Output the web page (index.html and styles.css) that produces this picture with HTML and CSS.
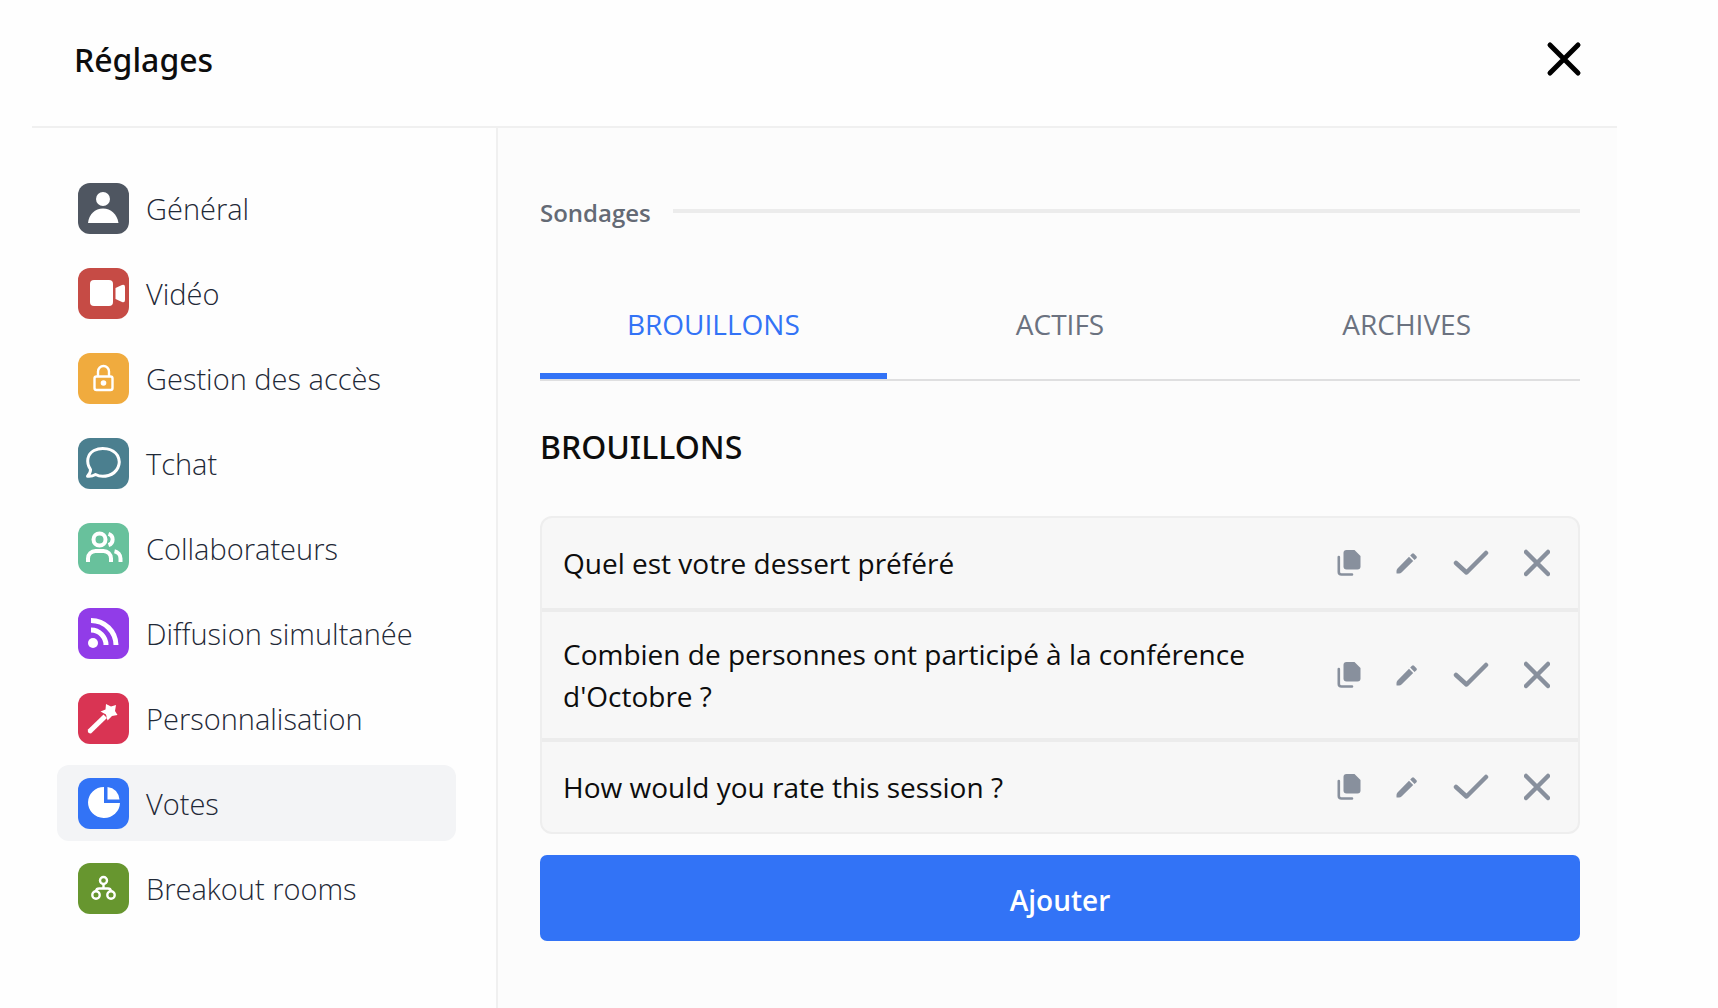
FILE: index.html
```html
<!DOCTYPE html>
<html lang="fr">
<head>
<meta charset="utf-8">
<title>Réglages</title>
<link rel="stylesheet" href="styles.css">
</head>
<body>
<div class="dialog">
  <header class="header">
    <h1 class="title">Réglages</h1>
    <button class="close" type="button" aria-label="Fermer">
      <svg width="36" height="36" viewBox="0 0 36 36"><path d="M4 4 32 32M32 4 4 32" fill="none" stroke="currentColor" stroke-width="5" stroke-linecap="round"/></svg>
    </button>
  </header>
  <div class="body">
    <nav class="sidebar">
      <a class="item" href="#general">
        <svg class="tile general" viewBox="0 0 51 51"><circle cx="25" cy="16" r="7"/><path d="M10 40C11 31 17 25.500 25 25.500S39 31 40.500 40Z"/></svg>
        <span>Général</span></a>
      <a class="item" href="#video">
        <svg class="tile video" viewBox="0 0 51 51"><rect x="12" y="12" width="23" height="26" rx="4"/><path d="M37.500 20 44 17q3-1 3 2V32q0 3-3 2L37.500 31Z"/></svg>
        <span>Vidéo</span></a>
      <a class="item" href="#acces">
        <svg class="tile access" viewBox="0 0 51 51"><g class="line thin"><rect x="16.500" y="23.500" width="18" height="13.500" rx="2"/><path d="M20 23V18.500a5.500 5.500 0 0 1 11 0V23"/></g><circle cx="25.500" cy="30" r="2.800"/></svg>
        <span>Gestion des accès</span></a>
      <a class="item" href="#tchat">
        <svg class="tile chat" viewBox="0 0 51 51"><path class="line" d="M12.500 31.500C7.500 24 9.500 16 16 12.500 24 8.500 35 10.500 39.500 17.500 44 26 39 35 30.500 37.500 26 38.800 20.500 38.200 17.500 36.500 15 38 12 38.500 9.500 38.200 11.500 36 12.800 34 12.500 31.500Z"/></svg>
        <span>Tchat</span></a>
      <a class="item" href="#collaborateurs">
        <svg class="tile team" viewBox="0 0 51 51"><g class="line bold"><circle cx="21.500" cy="16.500" r="6"/><path d="M10 39V35.500A7.500 7.500 0 0 1 17.500 28H25.500A7.500 7.500 0 0 1 33 35.500V39M30.500 10.800a6 6 0 0 1 0 11.400M36.500 28.200A7.500 7.500 0 0 1 42.500 35.500V39"/></g></svg>
        <span>Collaborateurs</span></a>
      <a class="item" href="#diffusion">
        <svg class="tile cast" viewBox="0 0 51 51"><circle cx="15" cy="35" r="5"/><path class="line wide" d="M13 22A15 15 0 0 1 28 37M13 12.500A25 25 0 0 1 38 37"/></svg>
        <span>Diffusion simultanée</span></a>
      <a class="item" href="#personnalisation">
        <svg class="tile custom" viewBox="0 0 51 51"><path d="M10 36.500 25.500 21.500 29 25 13 40.500Q9 40.500 10 36.500Z"/><path d="M28 11 33 13.500 38 12 37 18 39.500 22 34 23 29.500 27.500 28 21.500 22.500 18.500 27.500 16.500Z"/></svg>
        <span>Personnalisation</span></a>
      <a class="item active" href="#votes" aria-current="page">
        <svg class="tile votes" viewBox="0 0 51 51"><path d="M26 9V25H42A16 15.500 0 1 1 26 9Z"/><path d="M29.500 9Q40 10.500 41.500 21.500H29.500Z"/></svg>
        <span>Votes</span></a>
      <a class="item" href="#breakout">
        <svg class="tile rooms" viewBox="0 0 51 51"><g class="line thin"><circle cx="25.500" cy="17.500" r="3.500"/><circle cx="18" cy="32" r="3.700"/><circle cx="33" cy="32" r="3.700"/><path d="M25.500 21V25.500M18 28Q18.500 25.500 21 25.500H30Q32.500 25.500 33 28"/></g></svg>
        <span>Breakout rooms</span></a>
    </nav>
    <main class="content">
      <div class="section"><h2 class="section-name">Sondages</h2><hr class="rule"></div>
      <div class="tabs" role="tablist">
        <button class="tab selected" type="button" role="tab" aria-selected="true">BROUILLONS</button>
        <button class="tab" type="button" role="tab" aria-selected="false">ACTIFS</button>
        <button class="tab" type="button" role="tab" aria-selected="false">ARCHIVES</button>
      </div>
      <h3 class="heading">BROUILLONS</h3>
      <svg class="symbols" aria-hidden="true">
        <symbol id="copy" viewBox="0 0 24 28"><path d="M9.500 1H17.500L23.500 7V17.500Q23.500 20.500 20.500 20.500H9.500Q6.500 20.500 6.500 17.500V4Q6.500 1 9.500 1Z"/><path d="M1.800 8V23Q1.800 25.500 4.500 25.500H15" fill="none" stroke="currentColor" stroke-width="2.600" stroke-linecap="round"/></symbol>
        <symbol id="pencil" viewBox="0 0 22 22"><path d="M13 4.800 17.200 9 5.500 20.500Q4.500 21.500 3 21.500H1Q.5 21.500 .5 21V19Q.5 17.500 1.500 16.500ZM14.200 3.600 16 1.800Q17 .8 18 1.800L20.500 4.200Q21.300 5.200 20.500 6.200L18.500 7.900Z"/></symbol>
        <symbol id="check" viewBox="0 0 36 28"><path d="M3 14 13.500 23.500 33 4" fill="none" stroke="currentColor" stroke-width="4.500" stroke-linecap="round" stroke-linejoin="round"/></symbol>
        <symbol id="cross" viewBox="1 0 26 28"><path d="M3 3 25 25M25 3 3 25" fill="none" stroke="currentColor" stroke-width="4.500" stroke-linecap="round"/></symbol>
      </svg>
      <ul class="polls">
        <li class="poll"><span class="question">Quel est votre dessert préféré</span>
          <span class="actions">
            <button type="button" aria-label="Dupliquer"><svg width="24" height="28"><use href="#copy"/></svg></button>
            <button type="button" aria-label="Modifier"><svg width="22" height="22"><use href="#pencil"/></svg></button>
            <button type="button" aria-label="Activer"><svg width="36" height="28"><use href="#check"/></svg></button>
            <button type="button" aria-label="Supprimer"><svg width="26" height="28"><use href="#cross"/></svg></button>
          </span></li>
        <li class="poll"><span class="question">Combien de personnes ont participé à la conférence d'Octobre ?</span>
          <span class="actions">
            <button type="button" aria-label="Dupliquer"><svg width="24" height="28"><use href="#copy"/></svg></button>
            <button type="button" aria-label="Modifier"><svg width="22" height="22"><use href="#pencil"/></svg></button>
            <button type="button" aria-label="Activer"><svg width="36" height="28"><use href="#check"/></svg></button>
            <button type="button" aria-label="Supprimer"><svg width="26" height="28"><use href="#cross"/></svg></button>
          </span></li>
        <li class="poll"><span class="question">How would you rate this session ?</span>
          <span class="actions">
            <button type="button" aria-label="Dupliquer"><svg width="24" height="28"><use href="#copy"/></svg></button>
            <button type="button" aria-label="Modifier"><svg width="22" height="22"><use href="#pencil"/></svg></button>
            <button type="button" aria-label="Activer"><svg width="36" height="28"><use href="#check"/></svg></button>
            <button type="button" aria-label="Supprimer"><svg width="26" height="28"><use href="#cross"/></svg></button>
          </span></li>
      </ul>
      <button class="add" type="button">Ajouter</button>
    </main>
  </div>
</div>
</body>
</html>
```
FILE: styles.css
```css
* { box-sizing: border-box; }

body {
  margin: 0;
  background: #fefefe;
  color: #0d0d0d;
  font-family: "Open Sans", "Noto Sans", sans-serif;
  font-size: 28px;
}

h1, h2, h3, ul { margin: 0; padding: 0; }
button { padding: 0; border: 0; background: none; color: inherit; font: inherit; cursor: pointer; }
svg { display: block; }

.dialog {
  display: flex;
  flex-direction: column;
  min-height: 100vh;
  margin: 0 101px 0 32px;
}

.header {
  display: flex;
  align-items: center;
  justify-content: space-between;
  height: 128px;
  padding: 0 35px 8px 42px;
  border-bottom: 2px solid #f0f0f0;
}

.title, .heading {
  font-family: "Noto Sans", "Open Sans", sans-serif;
  font-size: 32px;
  font-weight: 500;
  line-height: 44px;
}
.title { padding-top: 2px; }
.close { color: #000; }

.body { display: flex; flex: 1; }

.sidebar {
  display: flex;
  flex-direction: column;
  flex: none;
  gap: 9px;
  width: 466px;
  padding: 42px 40px 42px 25px;
  border-right: 2px solid #f0f0f0;
}

.item {
  display: flex;
  align-items: center;
  gap: 17px;
  height: 76px;
  padding: 0 21px;
  border-radius: 12px;
  color: #1f2937;
  font-size: 29px;
  font-weight: 300;
  text-decoration: none;
}
.item.active { background: #f3f4f6; }

.tile { flex: none; width: 51px; height: 51px; border-radius: 12px; fill: #fff; }
.line { fill: none; stroke: #fff; stroke-width: 3; stroke-linejoin: round; }
.thin { stroke-width: 2.4; }
.bold { stroke-width: 4; }
.wide { stroke-width: 5; }
.general { background: #4f5661; }
.video { background: #c64b45; }
.access { background: #f0ab3e; }
.chat { background: #4b7f8f; }
.team { background: #68c19c; }
.cast { background: #913ce8; }
.custom { background: #d93453; }
.votes { background: #3273f6; }
.rooms { background: #67962f; }

.content {
  flex: 1;
  min-width: 0;
  padding: 65px 37px 65px 42px;
  background: #fcfcfc;
}

.section { display: flex; align-items: center; gap: 22px; height: 36px; }
.section-name { padding-top: 4px; color: #646a75; font-size: 24px; font-weight: 600; line-height: 36px; }
.rule { flex: 1; height: 4px; margin: 0; border: 0; background: #ececec; }

.tabs {
  display: grid;
  grid-template-columns: repeat(3, 1fr);
  margin-top: 42px;
  border-bottom: 2px solid #dfdfe0;
}
.tab {
  height: 108px;
  padding-top: 4px;
  border-bottom: 6px solid transparent;
  color: #6b7280;
}
.tab.selected { border-color: #3273f6; color: #3273f6; }

.heading { margin-top: 44px; }

.symbols { display: none; }

.polls {
  margin-top: 47px;
  border: 2px solid #eee;
  border-radius: 12px;
  background: #f7f7f7;
  list-style: none;
}
.poll {
  display: flex;
  align-items: center;
  justify-content: space-between;
  gap: 48px;
  min-height: 90px;
  padding: 21px 28px 21px 21px;
}
.poll + .poll { min-height: 94px; border-top: 4px solid #ececec; }
.question { line-height: 42px; }

.actions { display: flex; flex: none; align-items: center; gap: 35px; color: #88909d; }
.actions svg { fill: currentColor; }

.add {
  width: 100%;
  height: 86px;
  margin-top: 21px;
  padding-top: 4px;
  border-radius: 7px;
  background: #3273f6;
  color: #fff;
  font-weight: 600;
}
```
